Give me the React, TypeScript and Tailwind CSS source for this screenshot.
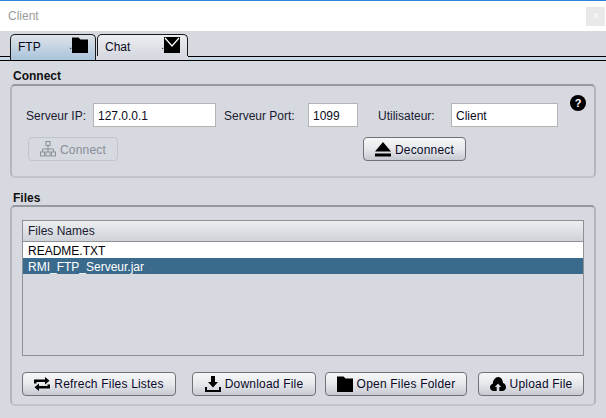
import type { ReactNode } from "react";

const FONT = { fontFamily: '"Liberation Sans", Arial, sans-serif' };

function FolderIcon({ className }: { className: string }) {
  return (
    <svg viewBox="0 0 16 16" className={className} fill="#000">
      <path d="M0 0.5 H6.5 L8.5 2.5 H16 V16 H0 Z" />
    </svg>
  );
}

function MailIcon({ className }: { className: string }) {
  return (
    <svg viewBox="0 0 16 16" className={className}>
      <rect width="16" height="16" fill="#000" />
      <path d="M1 1 L8 9 L15 1" fill="none" stroke="#fff" strokeWidth="1.2" />
    </svg>
  );
}

function NetworkIcon() {
  return (
    <svg viewBox="0 0 16 16" className="h-4 w-4" fill="none" stroke="#8a8f98" strokeWidth="1">
      <rect x="6" y="0.5" width="4" height="4" />
      <path d="M8 4.5 V8 M2.5 11 V8 H13.5 V11 M8 8 V11" />
      <rect x="0.5" y="11" width="4" height="4" />
      <rect x="6" y="11" width="4" height="4" />
      <rect x="11.5" y="11" width="4" height="4" />
    </svg>
  );
}

function EjectIcon() {
  return (
    <svg viewBox="0 0 16 16" className="h-[16px] w-[16px]" fill="#000">
      <path d="M8 1 L16 10.5 H0 Z" />
      <rect y="12.5" width="16" height="3" />
    </svg>
  );
}

function RefreshIcon() {
  return (
    <svg viewBox="0 0 16 14" className="h-[14px] w-[16px]" fill="#000">
      <path d="M0 6.5 V2.5 H11 V0 L15.5 3.8 L11 7.5 V5 H2.5 V6.5 Z" />
      <path d="M16 7.5 V11.5 H5 V14 L0.5 10.2 L5 6.5 V9 H13.5 V7.5 Z" />
    </svg>
  );
}

function DownloadIcon() {
  return (
    <svg viewBox="0 0 16 16" className="h-4 w-4" fill="#000">
      <path d="M6 0 H10 V6 H13 L8 11.5 L3 6 H6 Z" />
      <path d="M0 11 H2 V14 H14 V11 H16 V16 H0 Z" />
    </svg>
  );
}

function UploadIcon() {
  return (
    <svg viewBox="0 0 16 14" className="h-[14px] w-[16px]">
      <path
        d="M4 14 C1.5 14 0 12.3 0 10.2 C0 8.4 1.2 7 2.8 6.7 C3 3 5.4 0 8.2 0 C10.8 0 12.8 2.6 13 6 C14.8 6.5 16 8.2 16 10.2 C16 12.4 14.4 14 12 14 Z"
        fill="#000"
      />
      <path d="M8 6.5 L11.2 10 H9.3 V14 H6.7 V10 H4.8 Z" fill="#d9dce2" />
    </svg>
  );
}

function Field({ value, width }: { value: string; width: string }) {
  return (
    <div
      className={`flex h-[24px] items-center border border-[#b4b4b4] bg-white pl-[4px] pt-[1px] text-[12px] text-[#0a0a20] ${width}`}
    >
      {value}
    </div>
  );
}

function Btn({
  icon,
  label,
  width,
  disabled,
  textClass = "",
}: {
  icon: ReactNode;
  label: string;
  width: string;
  disabled?: boolean;
  textClass?: string;
}) {
  const skin = disabled
    ? "border-[#c2c5cb] text-[#8a8e96]"
    : "border-[#6f7278] bg-gradient-to-b from-[#f6f7f8] via-[#e6e8ec] to-[#c6c9d0] text-[#0a0a28]";
  return (
    <div
      className={`flex h-[24px] items-center justify-center gap-[4px] rounded-[4px] border text-[12px] tracking-[0.2px] ${skin} ${width}`}
    >
      {icon}
      <span className={textClass}>{label}</span>
    </div>
  );
}

function Panel({ className, children }: { className: string; children: ReactNode }) {
  return (
    <div
      className={`mx-[10px] rounded-[5px] border-2 border-t-[#97999e] border-l-[#b4b6bb] border-r-[#b4b6bb] border-b-[#c2c4c9] ${className}`}
    >
      {children}
    </div>
  );
}

export default function App() {
  return (
    <div style={FONT} className="flex h-[418px] w-[606px] flex-col overflow-hidden bg-[#d6d9e0] text-[12px]">
      {/* Title bar */}
      <div className="flex h-[31px] shrink-0 items-center justify-between border-t border-[#2b83dc] bg-white pl-[8px] pr-[1px]">
        <span className="text-[12px] text-[#9a9a9a]">Client</span>
        <div className="flex h-[19px] w-[19px] items-center justify-center bg-[#e9e9e9] text-[9px] text-white">x</div>
      </div>

      {/* Tabs */}
      <div className="mt-[3px] flex h-[27px] shrink-0 border-b border-black">
        <div className="mt-[22px] w-[10px] border-t border-black bg-[#cad7e5]" />
        <div className="flex h-[26px] w-[86px] items-start justify-between rounded-t-[5px] border border-b-0 border-[#1a1a1a] bg-gradient-to-b from-[#dfe3e9] to-[#a9c3da] pl-[7px] pr-[7px] pt-[2px] text-[#0a0a20]">
          <span className="pt-[1px]">FTP</span>
          <span className="flex items-end text-[10px] leading-[14px]">
            .<FolderIcon className="h-[16px] w-[16px]" />
          </span>
        </div>
        <div className="ml-[1px] flex h-[22px] w-[91px] items-start justify-between rounded-t-[5px] border border-b-0 border-[#1a1a1a] bg-gradient-to-b from-[#eceef1] to-[#d6d9e0] pl-[7px] pr-[7px] pt-[2px] text-[#0a0a20]">
          <span className="pt-[1px]">Chat</span>
          <span className="flex items-end text-[10px] leading-[14px]">
            .<MailIcon className="h-[16px] w-[16px]" />
          </span>
        </div>
        <div className="mt-[22px] flex-1 border-t border-black bg-[#cad7e5]" />
      </div>

      {/* Connect */}
      <div className="mt-[8px] h-[15px] pl-[13px] text-[12px] font-bold leading-[15px] text-[#111]">Connect</div>
      <Panel className="relative flex h-[94px] flex-col px-[14px] pt-[17px]">
        <div className="flex items-center">
          <span className="w-[67px] pt-[1px] text-[#1a1a30]">Serveur IP:</span>
          <Field value="127.0.0.1" width="w-[123px]" />
          <span className="ml-[8px] w-[84px] pt-[1px] text-[#1a1a30]">Serveur Port:</span>
          <Field value="1099" width="w-[50px]" />
          <span className="ml-[20px] w-[73px] pt-[1px] text-[#1a1a30]">Utilisateur:</span>
          <Field value="Client" width="w-[107px]" />
        </div>
        <div className="absolute right-[8px] top-[9px] flex h-[16px] w-[16px] items-center justify-center rounded-full bg-black text-[11px] font-bold leading-none text-white">
          ?
        </div>
        <div className="mt-[10px] flex pl-[2px]">
          <Btn icon={<NetworkIcon />} label="Connect" width="w-[90px]" textClass="pt-[1px]" disabled />
          <div className="ml-[245px]">
            <Btn icon={<EjectIcon />} label="Deconnect" width="w-[103px]" textClass="pt-[1px]" />
          </div>
        </div>
      </Panel>

      {/* Files */}
      <div className="mt-[13px] h-[14px] pl-[13px] text-[12px] font-bold leading-[15px] text-[#111]">Files</div>
      <Panel className="flex h-[201px] flex-col px-[10px] pt-[13px]">
        <div className="flex h-[136px] flex-col border border-[#8e9096]">
          <div className="flex h-[21px] items-center border-b border-[#8e9096] bg-gradient-to-b from-[#eceef1] to-[#cfd2d8] pl-[5px] text-[#1a1a30]">
            Files Names
          </div>
          <div className="flex h-[16px] items-center bg-white pl-[5px] pt-[1px] text-black">README.TXT</div>
          <div className="flex h-[16px] items-center bg-[#3a6a8c] pl-[5px] pt-[1px] text-white">RMI_FTP_Serveur.jar</div>
        </div>
        <div className="mt-[16px] flex">
          <Btn icon={<RefreshIcon />} label="Refrech Files Listes" width="w-[154px]" />
          <div className="ml-[16px]">
            <Btn icon={<DownloadIcon />} label="Download File" width="w-[124px]" />
          </div>
          <div className="ml-[9px]">
            <Btn icon={<FolderIcon className="h-[16px] w-[16px]" />} label="Open Files Folder" width="w-[142px]" />
          </div>
          <div className="ml-[11px]">
            <Btn icon={<UploadIcon />} label="Upload File" width="w-[106px]" />
          </div>
        </div>
      </Panel>
    </div>
  );
}
